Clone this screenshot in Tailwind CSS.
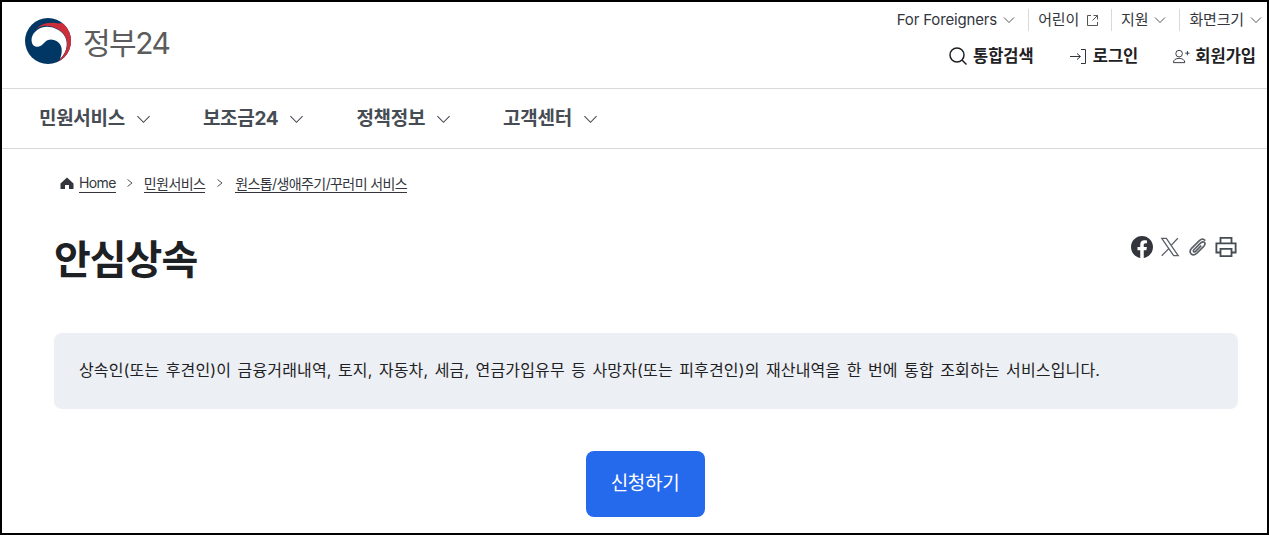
<!DOCTYPE html>
<html lang="ko">
<head>
    <meta charset="UTF-8">
    <meta name="viewport" content="width=device-width, initial-scale=1.0">
    <title>안심상속 - 정부24</title>
    <script src="https://cdn.jsdelivr.net/npm/@tailwindcss/browser@4"></script>
</head>
<body class="bg-white font-['Inter','Noto_Sans_CJK_KR',sans-serif] text-[#1e2124]">
    <div class="h-[535px] overflow-hidden border-2 border-black">
        <!-- header -->
        <header class="flex h-[87px] justify-between border-b border-[#d9d9d9] pl-[22px] pr-[5px]">
            <a href="#" class="mt-[15px] flex h-[48px] items-center gap-[11px]">
                <svg width="48" height="46" viewBox="0 0 48 46">
                    <circle cx="24" cy="23" r="23" fill="#003764"/>
                    <path d="M8 25C6 18 11 12 18 9.500C27 7 39 12 42 21C44 28 42 35 36 41C40 31 37 24 30 22C24 20 21 24 18 27C14 30 9 29 8 25Z" fill="#fff"/>
                    <path d="M10 14C14 7 22 4 30 4.800C33 5.200 36 6 38 4.700A23 23 0 0 1 34 43.700C42 36 45 27 42 20C38 11 27 7 19 8C15 8.500 12 11 10 14Z" fill="#cd2e3a"/>
                </svg>
                <span class="pt-[4px] text-[30px] font-normal tracking-[-1.5px] text-[#5c5c5c]">정부24</span>
            </a>
            <div class="flex flex-col items-end">
                <ul class="mt-[8px] flex h-[20px] items-center text-[15px] tracking-[-0.15px] text-[#33363d]">
                    <li class="flex items-center gap-[6px] pr-[13px]">
                        For Foreigners
                        <svg class="size-[12px]" viewBox="0 0 12 12" fill="none" stroke="#555" stroke-width="1"><path d="M1 3.500L6 8.500L11 3.500"/></svg>
                    </li>
                    <li class="flex items-center gap-[7px] border-l border-[#d9d9d9] pl-[9px] pr-[12px]">
                        어린이
                        <svg class="size-[13px]" viewBox="0 0 13 13" fill="none" stroke="#555" stroke-width="1"><path d="M5 1.500H1.500V11.500H11.500V8M7.500 1.500H11.500V5.500M11.500 1.500L6.500 6.500"/></svg>
                    </li>
                    <li class="flex items-center gap-[6px] border-l border-[#d9d9d9] pl-[9px] pr-[13px]">
                        지원
                        <svg class="size-[12px]" viewBox="0 0 12 12" fill="none" stroke="#555" stroke-width="1"><path d="M1 3.500L6 8.500L11 3.500"/></svg>
                    </li>
                    <li class="flex items-center gap-[6px] border-l border-[#d9d9d9] pl-[9px]">
                        화면크기
                        <svg class="size-[12px]" viewBox="0 0 12 12" fill="none" stroke="#555" stroke-width="1"><path d="M1 3.500L6 8.500L11 3.500"/></svg>
                    </li>
                </ul>
                <div class="mr-[6px] mt-[14px] flex items-center text-[16.500px] font-bold text-[#1e2124]">
                    <a href="#" class="flex items-center gap-[5px]">
                        <svg class="size-[20px]" viewBox="0 0 20 20" fill="none" stroke="#1e2124" stroke-width="1.500"><circle cx="9" cy="9" r="7"/><path d="M14 14L18.500 18.500"/></svg>
                        통합검색
                    </a>
                    <a href="#" class="ml-[35px] flex items-center gap-[5px]">
                        <svg class="size-[19px]" viewBox="0 0 19 19" fill="none" stroke="#33363d" stroke-width="1"><path d="M1 9.500H11M8 6.500L11.500 9.500L8 12.500M12 2.500H16.500V16.500H12"/></svg>
                        로그인
                    </a>
                    <a href="#" class="ml-[34px] flex items-center gap-[5px]">
                        <svg class="size-[18px]" viewBox="0 0 19 19" fill="none" stroke="#33363d" stroke-width="1"><circle cx="7.500" cy="7" r="3.500"/><path d="M1.500 16.500C1.500 13.500 4 12 7.500 12C11 12 13.500 13.500 13.500 16.500H1.500ZM14 6.500H18.500M16.250 4.250V8.750"/></svg>
                        회원가입
                    </a>
                </div>
            </div>
        </header>

        <!-- main nav -->
        <nav class="flex h-[60px] items-center gap-[52px] border-b border-[#d9d9d9] pl-[37px] pt-[1px] text-[19px] font-bold tracking-[-0.3px] text-[#464c53]">
            <a href="#" class="flex items-center gap-[11px]">민원서비스
                <svg class="size-[15px]" viewBox="0 0 16 16" fill="none" stroke="#464c53" stroke-width="1.200"><path d="M1.500 4.500L8 11L14.500 4.500"/></svg>
            </a>
            <a href="#" class="flex items-center gap-[11px]">보조금24
                <svg class="size-[15px]" viewBox="0 0 16 16" fill="none" stroke="#464c53" stroke-width="1.200"><path d="M1.500 4.500L8 11L14.500 4.500"/></svg>
            </a>
            <a href="#" class="flex items-center gap-[11px]">정책정보
                <svg class="size-[15px]" viewBox="0 0 16 16" fill="none" stroke="#464c53" stroke-width="1.200"><path d="M1.500 4.500L8 11L14.500 4.500"/></svg>
            </a>
            <a href="#" class="flex items-center gap-[11px]">고객센터
                <svg class="size-[15px]" viewBox="0 0 16 16" fill="none" stroke="#464c53" stroke-width="1.200"><path d="M1.500 4.500L8 11L14.500 4.500"/></svg>
            </a>
        </nav>

        <main class="pl-[52px] pr-[29px]">
            <!-- breadcrumb -->
            <ol class="mt-[24px] flex h-[20px] items-center pl-[6px] text-[14px] tracking-[-0.6px] text-[#33363d]">
                <li class="flex items-center gap-[5px]">
                    <svg class="size-[14px]" viewBox="0 0 14 14" fill="#33363d"><path d="M7 1.500L13.500 7.500V13H9V9H5V13H0.500V7.500Z"/></svg>
                    <a href="#" class="border-b border-[#33363d] leading-[18px]">Home</a>
                </li>
                <li class="mx-[10px]"><svg class="size-[8px]" viewBox="0 0 8 8" fill="none" stroke="#555" stroke-width="1"><path d="M1.500 0.500L6 4L1.500 7.500"/></svg></li>
                <li><a href="#" class="border-b border-[#33363d] leading-[18px]">민원서비스</a></li>
                <li class="mx-[11px]"><svg class="size-[8px]" viewBox="0 0 8 8" fill="none" stroke="#555" stroke-width="1"><path d="M1.500 0.500L6 4L1.500 7.500"/></svg></li>
                <li><a href="#" class="border-b border-[#33363d] leading-[18px]">원스톱/생애주기/꾸러미 서비스</a></li>
            </ol>

            <!-- title row -->
            <div class="mt-[31px] flex items-start justify-between">
                <h1 class="text-[40px] leading-[72px] font-bold tracking-[-1px] text-[#1e2124]">안심상속</h1>
                <div class="mr-[1px] mt-[12px] flex items-center gap-[6px]">
                    <svg class="size-[22px]" viewBox="0 0 24 24" fill="#33363d"><path d="M24 12C24 5.400 18.600 0 12 0S0 5.400 0 12C0 18 4.400 23 10.100 23.900V15.500H7.100V12H10.100V9.400C10.100 6.400 11.900 4.700 14.700 4.700C16 4.700 17.400 4.900 17.400 4.900V7.900H15.900C14.400 7.900 13.900 8.800 13.900 9.800V12H17.300L16.800 15.500H13.900V23.900C19.600 23 24 18 24 12Z"/></svg>
                    <svg class="size-[22px]" viewBox="0 0 24 24" fill="none" stroke="#5a5f66" stroke-width="1.400"><path d="M3 2.500H8L21 21.500H16ZM11 13.500L3 21.500M20.500 2.500L13 10.500"/></svg>
                    <svg class="size-[22px]" viewBox="0 0 24 24" fill="none" stroke="#5a5f66" stroke-width="1.800"><path d="M20 5C18 3 15.500 3.200 13.500 5L5 13.500C3.200 15.500 3 18 4.500 19.500C6 21 8.500 20.800 10.500 19L18.500 11C19.800 9.500 20 8 19 7C18 6 16.500 6.200 15 7.500L7.500 15C6.800 15.800 6.800 16.600 7.300 17C7.800 17.500 8.600 17.400 9.300 16.700L15.500 10.500"/></svg>
                    <svg class="size-[22px]" viewBox="0 0 24 24" fill="none" stroke="#464c53" stroke-width="2"><path d="M6 8V2H18V8M6 18H1.500V8H22.500V18H18M6 14H18V22H6Z"/></svg>
                </div>
            </div>

            <!-- description -->
            <div class="mt-[37px] flex h-[76px] items-center rounded-[8px] bg-[#eceff3] px-[25px] pb-[2px] text-[16px] tracking-[0.15px] [word-spacing:1.750px] text-[#1e2124]">
                상속인(또는 후견인)이 금융거래내역, 토지, 자동차, 세금, 연금가입유무 등 사망자(또는 피후견인)의 재산내역을 한 번에 통합 조회하는 서비스입니다.
            </div>

            <div class="mt-[42px] flex justify-center pr-[2px]">
                <a href="#" class="flex h-[66px] w-[119px] items-center justify-center rounded-[8px] bg-[#2569ed] text-[19px] font-normal tracking-[-0.3px] text-white">신청하기</a>
            </div>
        </main>
    </div>
</body>
</html>
